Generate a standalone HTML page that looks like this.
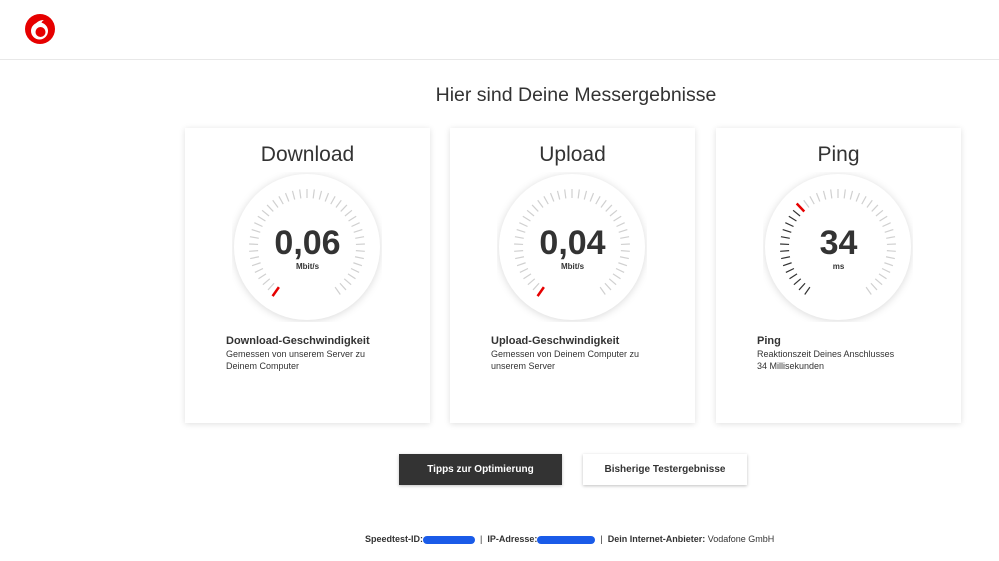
<!DOCTYPE html>
<html><head><meta charset="utf-8"><style>
*{margin:0;padding:0;box-sizing:border-box}
body{width:999px;height:561px;background:#fff;font-family:"Liberation Sans",sans-serif;color:#333;position:relative;overflow:hidden}
.hdr{position:absolute;left:0;top:0;width:999px;height:60px;border-bottom:1px solid #e8e8e8}
h1{position:absolute;left:0;width:1152px;top:84px;text-align:center;font-weight:normal;font-size:19.5px;color:#333}
.card{position:absolute;top:128px;width:245px;height:295px;background:#fff;box-shadow:0 1px 6px rgba(0,0,0,.13)}
.card h2{position:absolute;top:15px;width:100%;text-align:center;font-weight:normal;font-size:21px;color:#333}
.card svg{position:absolute;left:47px;top:44px}
.val{position:absolute;top:96px;width:100%;text-align:center;font-weight:bold;font-size:34px;color:#333}
.unit{position:absolute;top:134px;width:100%;text-align:center;font-weight:bold;font-size:8px;color:#333}
.desc{position:absolute;left:41px;top:207px;font-size:9px;line-height:12px;color:#333}
.desc b{font-size:11px;display:block;margin-bottom:1px}
.btn{position:absolute;top:454px;height:31px;font-size:10px;font-weight:bold;line-height:32px;text-align:center;box-shadow:0 1px 3px rgba(0,0,0,.25)}
.foot{position:absolute;top:534px;left:365px;font-size:9px;white-space:nowrap}
.blob{display:inline-block;width:52px;height:8px;background:#1a5be8;border-radius:4px;vertical-align:middle}
</style></head><body>
<div class="hdr"><svg width="32" height="32" style="position:absolute;left:24px;top:13px" viewBox="0 0 32 32"><circle cx="16" cy="16" r="15" fill="#e60000"/><circle cx="15.5" cy="18" r="8.5" fill="#fff"/><circle cx="16.5" cy="19" r="5" fill="#e60000"/><path d="M10 14c1-4 5-7 10-7-2 1-3 3-3 6z" fill="#fff"/></svg></div>
<h1>Hier sind Deine Messergebnisse</h1>

<div class="card" style="left:185px"><h2>Download</h2><svg width="150" height="150" data-r="0"></svg><div class="val">0,06</div><div class="unit">Mbit/s</div><div class="desc"><b>Download-Geschwindigkeit</b>Gemessen von unserem Server zu<br>Deinem Computer</div></div>
<div class="card" style="left:450px"><h2>Upload</h2><svg width="150" height="150" data-r="0"></svg><div class="val">0,04</div><div class="unit">Mbit/s</div><div class="desc"><b>Upload-Geschwindigkeit</b>Gemessen von Deinem Computer zu<br>unserem Server</div></div>
<div class="card" style="left:716px"><h2>Ping</h2><svg width="150" height="150" data-r="100"></svg><div class="val">34</div><div class="unit">ms</div><div class="desc"><b>Ping</b>Reaktionszeit Deines Anschlusses<br>34 Millisekunden</div></div>

<div class="btn" style="left:399px;width:163px;background:#333;color:#fff">Tipps zur Optimierung</div>
<div class="btn" style="left:583px;width:164px;background:#fff;color:#333">Bisherige Testergebnisse</div>

<div class="foot"><b>Speedtest-ID:</b><span class="blob"></span> &nbsp;|&nbsp; <b>IP-Adresse:</b><span class="blob" style="width:58px"></span> &nbsp;|&nbsp; <b>Dein Internet-Anbieter:</b> Vodafone GmbH</div>

<script>
document.querySelectorAll('.card svg').forEach(function(s){
 var red=+s.getAttribute('data-r'),h='<circle cx="75" cy="75" r="73" fill="#fff" style="filter:drop-shadow(0 1px 4px rgba(0,0,0,.15))"/>';
 var n=40;
 for(var i=0;i<=n;i++){
  var a=215+i*290/n, rad=a*Math.PI/180;
  var sx=Math.sin(rad),sy=-Math.cos(rad);
  var r1=49,r2=58,col='#d0d0d0',w=1.2;
  var d=a-215;
  if(red>0&&d<red-2){col='#333';}
  if(Math.abs(d-red)<3.7){col='#e60000';w=2.5;r1=49;r2=60;}
  h+='<line x1="'+(75+sx*r1)+'" y1="'+(75+sy*r1)+'" x2="'+(75+sx*r2)+'" y2="'+(75+sy*r2)+'" stroke="'+col+'" stroke-width="'+w+'"/>';
 }
 s.innerHTML=h;
});
</script>
</body></html>
